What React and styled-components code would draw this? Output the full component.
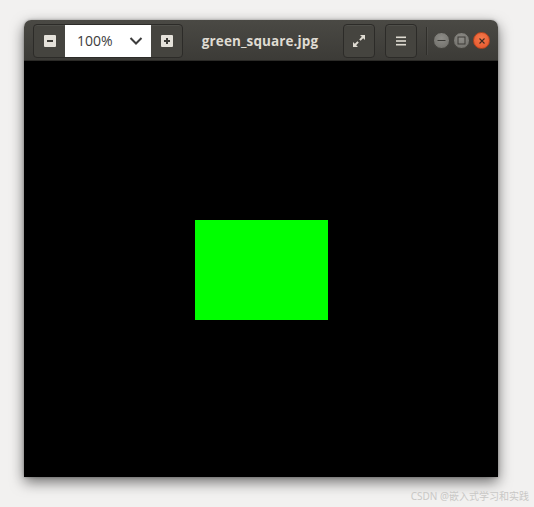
import React from 'react';
import styled, { createGlobalStyle } from 'styled-components';

const GlobalStyle = createGlobalStyle`
  html, body {
    margin: 0;
    padding: 0;
    background: #f2f1f0;
  }
  body {
    font-family: 'Open Sans', 'DejaVu Sans', sans-serif;
  }
`;

const Page = styled.div`
  position: relative;
  width: 534px;
  height: 507px;
  padding: 20px 0 0 24px;
  box-sizing: border-box;
  overflow: hidden;
`;

const Window = styled.div`
  width: 474px;
  border-radius: 7px 7px 0 0;
  overflow: hidden;
  box-shadow: 0 5px 14px rgba(0, 0, 0, 0.55), 0 0 3px rgba(0, 0, 0, 0.3);
`;

const HeaderBar = styled.div`
  height: 41px;
  box-sizing: border-box;
  padding: 4px 8px 3px 9px;
  display: flex;
  align-items: center;
  background: linear-gradient(#4a4944, #3c3b37);
  border-bottom: 1px solid #2b2a27;
`;

const Group = styled.div`
  display: flex;
  height: 34px;
  box-sizing: border-box;
  border: 1px solid #2c2b28;
  border-radius: 4px;
  overflow: hidden;
  background: #45443f;
  box-shadow: inset 0 1px 0 rgba(255, 255, 255, 0.06);
`;

const GroupButton = styled.div`
  width: 31px;
  display: flex;
  align-items: center;
  justify-content: center;
`;

const SquareIcon = styled.div`
  width: 12px;
  height: 12px;
  border-radius: 1px;
  background: #e4e1da;
  display: flex;
  align-items: center;
  justify-content: center;
`;

const ZoomField = styled.div`
  width: 86px;
  background: #ffffff;
  display: flex;
  align-items: center;
  justify-content: space-between;
  padding: 0 8px 0 12px;
  box-sizing: border-box;
  font-size: 14px;
  color: #3c3c3c;
`;

const Title = styled.div`
  flex: 1;
  text-align: center;
  padding-right: 6px;
  font-weight: 700;
  font-size: 13.5px;
  color: #dfdbd2;
  letter-spacing: 0.1px;
`;

const ToolButton = styled.div`
  width: 32px;
  height: 34px;
  box-sizing: border-box;
  border: 1px solid #2c2b28;
  border-radius: 4px;
  background: #45443f;
  box-shadow: inset 0 1px 0 rgba(255, 255, 255, 0.06);
  display: flex;
  align-items: center;
  justify-content: center;
  margin-left: ${(p) => p.gap || 0}px;
`;

const Separator = styled.div`
  width: 1px;
  height: 28px;
  background: #2f2e2a;
  box-shadow: 1px 0 0 rgba(255, 255, 255, 0.05);
  margin: 0 6px 0 9px;
`;

const WinButtons = styled.div`
  display: flex;
  gap: 3px;
`;

const WinButton = styled.div`
  width: 17px;
  height: 17px;
  border-radius: 50%;
  box-sizing: border-box;
  border: 1px solid ${(p) => (p.close ? '#b8451e' : '#45443f')};
  background: ${(p) =>
    p.close
      ? 'radial-gradient(circle at 50% 35%, #f47a4c, #e4532a)'
      : 'radial-gradient(circle at 50% 35%, #8e8d88, #6d6c67)'};
  display: flex;
  align-items: center;
  justify-content: center;
`;

const Canvas = styled.div`
  height: 416px;
  background: #000000;
  display: flex;
  align-items: center;
  justify-content: center;
  padding-top: 2px;
  box-sizing: border-box;
`;

const GreenRect = styled.div`
  width: 133px;
  height: 100px;
  background: #00ff00;
`;

const Watermark = styled.div`
  position: absolute;
  right: 5px;
  bottom: 4px;
  font-family: 'Noto Sans', 'Noto Sans CJK SC', sans-serif;
  font-size: 10px;
  color: #c9c8c6;
`;

export default function App() {
  return (
    <>
      <GlobalStyle />
      <Page>
        <Window>
          <HeaderBar>
            <Group>
              <GroupButton>
                <SquareIcon>
                  <svg width="8" height="8" viewBox="0 0 8 8">
                    <rect x="1" y="3" width="6" height="2" fill="#3c3b37" />
                  </svg>
                </SquareIcon>
              </GroupButton>
              <ZoomField>
                <span>100%</span>
                <svg width="14" height="10" viewBox="0 0 14 10">
                  <path d="M1.5 2 L7 7.5 L12.5 2" fill="none" stroke="#3c3c3c" strokeWidth="2" />
                </svg>
              </ZoomField>
              <GroupButton>
                <SquareIcon>
                  <svg width="8" height="8" viewBox="0 0 8 8">
                    <rect x="1" y="3" width="6" height="2" fill="#3c3b37" />
                    <rect x="3" y="1" width="2" height="6" fill="#3c3b37" />
                  </svg>
                </SquareIcon>
              </GroupButton>
            </Group>
            <Title>green_square.jpg</Title>
            <ToolButton>
              <svg width="14" height="14" viewBox="0 0 14 14">
                <path d="M8 1 H13 V6 L11.2 4.2 L8.6 6.8 L7.2 5.4 L9.8 2.8 Z" fill="#dfdbd2" />
                <path d="M6 13 H1 V8 L2.8 9.8 L5.4 7.2 L6.8 8.6 L4.2 11.2 Z" fill="#dfdbd2" />
              </svg>
            </ToolButton>
            <ToolButton gap={10}>
              <svg width="12" height="12" viewBox="0 0 12 12">
                <rect x="1" y="1.5" width="10" height="1.6" fill="#dfdbd2" />
                <rect x="1" y="5.2" width="10" height="1.6" fill="#dfdbd2" />
                <rect x="1" y="8.9" width="10" height="1.6" fill="#dfdbd2" />
              </svg>
            </ToolButton>
            <Separator />
            <WinButtons>
              <WinButton>
                <svg width="9" height="9" viewBox="0 0 9 9">
                  <rect x="0.5" y="4" width="8" height="1" fill="#3c3b37" />
                </svg>
              </WinButton>
              <WinButton>
                <svg width="9" height="9" viewBox="0 0 9 9">
                  <rect x="1" y="1" width="7" height="7" fill="none" stroke="#3c3b37" strokeWidth="1" />
                </svg>
              </WinButton>
              <WinButton close>
                <svg width="8" height="8" viewBox="0 0 8 8">
                  <path d="M1.5 1.5 L6.5 6.5 M6.5 1.5 L1.5 6.5" stroke="#3c2a22" strokeWidth="1.1" />
                </svg>
              </WinButton>
            </WinButtons>
          </HeaderBar>
          <Canvas>
            <GreenRect />
          </Canvas>
        </Window>
        <Watermark>CSDN @嵌入式学习和实践</Watermark>
      </Page>
    </>
  );
}
